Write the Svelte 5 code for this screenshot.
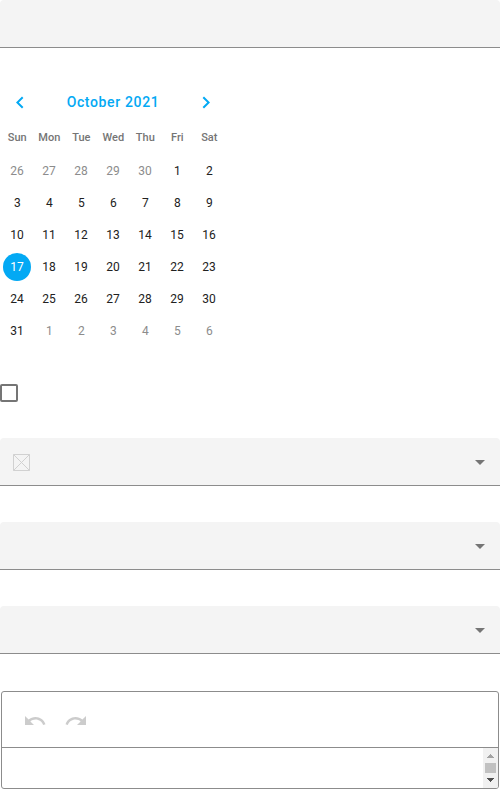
<script>
  const weekdays = ['Sun', 'Mon', 'Tue', 'Wed', 'Thu', 'Fri', 'Sat'];
  const days = Array.from({ length: 42 }, (_, i) => {
    const date = new Date(2021, 8, 26 + i);
    return { n: date.getDate(), other: date.getMonth() !== 9, selected: i === 21 };
  });
</script>

<main>
  <div class="field"></div>

  <section class="calendar">
    <header>
      <button aria-label="Previous month">
        <svg width="24" height="24" viewBox="0 0 24 24"><path d="M15.41 7.41 14 6l-6 6 6 6 1.41-1.41L10.83 12z" /></svg>
      </button>
      <span class="caption">October 2021</span>
      <button aria-label="Next month">
        <svg width="24" height="24" viewBox="0 0 24 24"><path d="M10 6 8.59 7.41 13.17 12l-4.58 4.59L10 18l6-6z" /></svg>
      </button>
    </header>
    <div class="grid names">
      {#each weekdays as name}<span>{name}</span>{/each}
    </div>
    <div class="grid days">
      {#each days as day}
        <span class:other={day.other} class:single={day.n < 10} class:selected={day.selected}>{day.n}</span>
      {/each}
    </div>
  </section>

  <div class="checkbox"></div>

  <div class="field select">
    <svg class="swatch" width="17" height="17" viewBox="0 0 17 17">
      <path d="M.5.5h16v16H.5zM.5.5l16 16M16.5.5l-16 16" />
    </svg>
    <i class="arrow"></i>
  </div>
  <div class="field select"><i class="arrow"></i></div>
  <div class="field select"><i class="arrow"></i></div>

  <div class="editor">
    <div class="toolbar">
      <svg width="24" height="24" viewBox="0 0 24 24"><path d="M12.5 8c-2.65 0-5.05.99-6.9 2.6L2 7v9h9l-3.62-3.62c1.39-1.16 3.16-1.88 5.12-1.88 3.54 0 6.55 2.31 7.6 5.5l2.37-.78C21.08 11.03 17.15 8 12.5 8z" /></svg>
      <svg width="24" height="24" viewBox="0 0 24 24"><path d="M18.4 10.6C16.55 8.99 14.15 8 11.5 8c-4.65 0-8.58 3.03-9.96 7.22L3.9 16c1.05-3.19 4.05-5.5 7.6-5.5 1.95 0 3.73.72 5.12 1.88L13 16h9V7l-3.6 3.6z" /></svg>
    </div>
    <div class="content">
      <svg class="scroll" width="15" height="40" viewBox="0 0 15 40" shape-rendering="crispEdges">
        <path fill="#f1f1f1" d="M0 0h15v40H0z" />
        <path fill="#a3a3a3" d="M7 6h1v1h1v1h1v1h1v1H4V9h1V8h1V7h1z" />
        <path fill="#c1c1c1" d="M2 15h11v10H2z" />
        <path fill="#505050" d="M4 30h7v1h-1v1H9v1H8v1H7v-1H6v-1H5v-1H4z" />
      </svg>
    </div>
  </div>
</main>

<style>
  :global(body) {
    margin: 0;
    background: #fff;
  }
  main {
    width: 500px;
    height: 800px;
    overflow: hidden;
    font-family: Roboto, sans-serif;
  }
  .field {
    box-sizing: border-box;
    height: 48px;
    background: #f4f4f4;
    border-bottom: 1px solid #8c8c8c;
    border-radius: 4px 4px 0 0;
  }
  .calendar {
    width: 224px;
    padding: 36px 1px 0;
  }
  header {
    display: flex;
    justify-content: space-between;
    align-items: center;
    height: 36px;
    padding: 0 7px;
    color: #03a9f4;
  }
  button {
    display: flex;
    padding: 0;
    border: 0;
    background: none;
    color: inherit;
  }
  button svg {
    fill: currentColor;
    overflow: visible;
  }
  button path {
    transform: translateY(0.5px);
  }
  .caption {
    font-size: 14px;
    font-weight: 500;
    letter-spacing: 0.64px;
  }
  .grid {
    display: grid;
    grid-template-columns: repeat(7, 32px);
  }
  .grid span {
    display: flex;
    align-items: center;
    justify-content: center;
  }
  .names {
    height: 35px;
    font-size: 11px;
    font-weight: 500;
    color: #757575;
  }
  .grid.names span {
    padding-left: 0.6px;
  }
  .days {
    grid-auto-rows: 32px;
    font-size: 12px;
    color: #212121;
  }
  .days .other {
    color: #8c8c8c;
  }
  .days .single {
    padding-left: 0.6px;
  }
  .days .selected {
    margin: 2px;
    border-radius: 50%;
    background: #03a9f4;
    color: #fff;
  }
  .checkbox {
    box-sizing: border-box;
    width: 18px;
    height: 18px;
    margin: 37px 0 36px;
    border: 2px solid #757575;
    border-radius: 2px;
  }
  .select {
    display: flex;
    align-items: center;
    padding: 0 15px 0 13px;
    margin-bottom: 36px;
  }
  .swatch {
    margin-top: 2px;
    fill: none;
    stroke: #d1d1d1;
  }
  .arrow {
    margin-left: auto;
    margin-top: 1px;
    border: 5px solid transparent;
    border-top-color: #757575;
    border-bottom: 0;
  }
  .editor {
    box-sizing: border-box;
    height: 98px;
    margin: 37px 1px 0;
    border: 1px solid #8c8c8c;
    border-radius: 3px;
    overflow: hidden;
  }
  .toolbar {
    box-sizing: border-box;
    display: flex;
    gap: 17px;
    height: 56px;
    padding: 17px 21px 0;
    border-bottom: 1px solid #8c8c8c;
    fill: #ccc;
  }
  .content {
    display: flex;
    justify-content: flex-end;
    height: 40px;
  }
</style>
